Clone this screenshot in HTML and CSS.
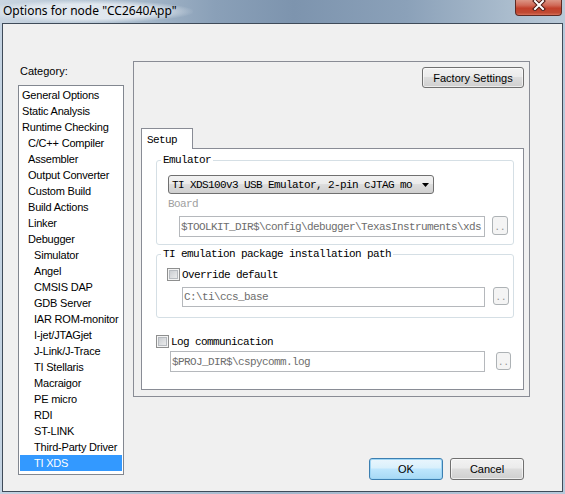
FILE: index.html
```html
<!DOCTYPE html>
<html lang="en">

<head>
  <meta charset="UTF-8" />
  <title>Options for node "CC2640App"</title>
  <link rel="stylesheet" href="styles.css">
</head>

<body>
  <div class="window">
    <div class="titlebar">
      <span class="title">Options for node "CC2640App"</span>
      <div class="close-btn">
        <svg width="14" height="11" viewBox="0 0 14 11">
          <path d="M3 1 L11 9 M11 1 L3 9" stroke="#4a1a14" stroke-width="4" stroke-linecap="square" fill="none" />
          <path d="M3 1 L11 9 M11 1 L3 9" stroke="#ffffff" stroke-width="2" stroke-linecap="square" fill="none" />
        </svg>
      </div>
    </div>

    <div class="client">
      <div class="category">
        <div class="category-label">Category:</div>
        <ul class="category-list">
          <li>General Options</li>
          <li>Static Analysis</li>
          <li>Runtime Checking</li>
          <li class="lvl1">C/C++ Compiler</li>
          <li class="lvl1">Assembler</li>
          <li class="lvl1">Output Converter</li>
          <li class="lvl1">Custom Build</li>
          <li class="lvl1">Build Actions</li>
          <li class="lvl1">Linker</li>
          <li class="lvl1">Debugger</li>
          <li class="lvl2">Simulator</li>
          <li class="lvl2">Angel</li>
          <li class="lvl2">CMSIS DAP</li>
          <li class="lvl2">GDB Server</li>
          <li class="lvl2">IAR ROM-monitor</li>
          <li class="lvl2">I-jet/JTAGjet</li>
          <li class="lvl2">J-Link/J-Trace</li>
          <li class="lvl2">TI Stellaris</li>
          <li class="lvl2">Macraigor</li>
          <li class="lvl2">PE micro</li>
          <li class="lvl2">RDI</li>
          <li class="lvl2">ST-LINK</li>
          <li class="lvl2">Third-Party Driver</li>
          <li class="lvl2 selected">TI XDS</li>
        </ul>
      </div>

      <div class="main">
        <div class="panel">
          <div class="panel-top">
            <button class="btn factory">Factory Settings</button>
          </div>

          <div class="tab-strip">
            <div class="tab mono">Setup</div>
          </div>

          <div class="tab-page mono">
            <fieldset class="group emulator">
              <legend>Emulator</legend>
              <div class="combo">
                <span class="combo-text">TI XDS100v3 USB Emulator, 2-pin cJTAG mo</span>
                <svg class="combo-arrow" width="7" height="4" viewBox="0 0 7 4">
                  <path d="M0 0 H7 L3.5 4 Z" fill="#000" />
                </svg>
              </div>
              <div class="field-label">Board</div>
              <div class="path-row board-row">
                <div class="edit">$TOOLKIT_DIR$\config\debugger\TexasInstruments\xds</div>
                <div class="browse">..</div>
              </div>
            </fieldset>

            <fieldset class="group package">
              <legend>TI emulation package installation path</legend>
              <label class="check-row override-row">
                <span class="checkbox"></span>
                <span>Override default</span>
              </label>
              <div class="path-row package-row">
                <div class="edit">C:\ti\ccs_base</div>
                <div class="browse">..</div>
              </div>
            </fieldset>

            <label class="check-row log-row">
              <span class="checkbox"></span>
              <span>Log communication</span>
            </label>
            <div class="path-row logfile-row">
              <div class="edit">$PROJ_DIR$\cspycomm.log</div>
              <div class="browse">..</div>
            </div>
          </div>
        </div>

        <div class="actions">
          <button class="btn default">OK</button>
          <button class="btn">Cancel</button>
        </div>
      </div>
    </div>
  </div>
</body>

</html>
```

FILE: styles.css
```css
* {
  box-sizing: border-box;
}

body {
  margin: 0;
  font-family: Tahoma, "Liberation Sans", Arial, sans-serif;
  font-size: 11px;
  color: #000;
  background: #b9cbdd;
}

/* Window frame */
.window {
  width: 565px;
  height: 494px;
  display: flex;
  flex-direction: column;
  background: linear-gradient(to right, #c4d3e2, #a3b7cc 50%, #b7c9db);
}

.titlebar {
  height: 23px;
  display: flex;
  align-items: flex-start;
  background: linear-gradient(to right, #c9d5e1 0%, #aebfcf 20%, #8aa0b8 38%, #7d94ae 52%, #8ba1b9 72%, #aabccd 90%, #b9c9d8 100%);
}

.title {
  height: 23px;
  padding: 3px 16px 0 3px;
  font-family: "Noto Sans", "Open Sans", sans-serif;
  font-size: 12px;
  line-height: 15px;
  color: #000;
  background: radial-gradient(ellipse at 45% 50%, rgba(226, 233, 240, 0.95) 45%, rgba(226, 233, 240, 0) 72%);
}

.close-btn {
  margin-left: auto;
  margin-right: 3px;
  width: 47px;
  height: 16px;
  border: 1px solid #5e2a23;
  border-top: none;
  border-radius: 0 0 4px 4px;
  background: linear-gradient(#dc9585 0%, #d06a58 35%, #c2402b 55%, #c04a33 85%, #d8705a 100%);
  display: flex;
  justify-content: center;
}

.client {
  flex: 1;
  margin: 0 2px 2px 2px;
  border: 1px solid #3f4b59;
  background: #f0f0f0;
  display: flex;
  padding-left: 15px;
}

/* Category tree */
.category {
  width: 106px;
  padding-top: 41px;
}

.category-label {
  line-height: 13px;
  margin: 0 0 7px 2px;
}

.category-list {
  list-style: none;
  margin: 0;
  height: 390px;
  padding: 1px;
  border: 1px solid #828790;
  background: #fff;
  letter-spacing: -0.2px;
}

.category-list li {
  line-height: 16px;
  height: 16px;
  padding-left: 2px;
  white-space: nowrap;
}

.category-list .lvl1 {
  padding-left: 8px;
}

.category-list .lvl2 {
  padding-left: 14px;
}

.category-list .selected {
  background: #3399ff;
  color: #fff;
}

/* Right side */
.main {
  width: 397px;
  margin-left: 9px;
  padding-top: 37px;
}

.panel {
  height: 336px;
  border: 1px solid #898c95;
  padding: 5px 5px 0 7px;
}

.panel-top {
  display: flex;
  justify-content: flex-end;
}

.btn {
  font: inherit;
  color: #000;
  padding: 0;
  border: 1px solid #707070;
  border-radius: 3px;
  background: linear-gradient(#f2f2f2 0%, #ebebeb 45%, #dddddd 50%, #cfcfcf 100%);
  box-shadow: inset 0 0 0 1px rgba(255, 255, 255, 0.6);
}

.factory {
  width: 102px;
  height: 21px;
}

.mono {
  font-family: "Liberation Mono", "DejaVu Sans Mono", monospace;
  font-size: 11px;
  letter-spacing: -0.6px;
}

.tab-strip {
  margin-top: 40px;
  display: flex;
}

.tab {
  position: relative;
  z-index: 1;
  width: 52px;
  height: 21px;
  margin-bottom: -1px;
  padding: 4px 0 0 5px;
  line-height: 14px;
  border: 1px solid #898c95;
  border-bottom: none;
  background: #fff;
}

.tab-page {
  height: 242px;
  border: 1px solid #898c95;
  background: #fff;
  padding-left: 14px;
  color: #000;
}

/* Group boxes */
.group {
  margin: 5px 9px 0 0;
  padding: 0;
  min-width: 0;
  border: 1px solid #d5dfe5;
  border-radius: 3px;
}

.group legend {
  margin-left: 4px;
  padding: 0 2px;
  line-height: 12px;
}

.emulator {
  padding-bottom: 7px;
}

.package {
  margin-top: 3px;
  padding-bottom: 10px;
}

.combo {
  display: flex;
  align-items: center;
  width: 266px;
  height: 19px;
  margin: 9px 0 0 11px;
  padding-left: 3px;
  border: 1px solid #707070;
  border-radius: 3px;
  background: linear-gradient(#f2f2f2 0%, #ebebeb 45%, #dddddd 50%, #cfcfcf 100%);
}

.combo-text {
  width: 243px;
  white-space: nowrap;
  line-height: 14px;
}

.combo-arrow {
  margin-left: 7px;
}

.field-label {
  margin: 4px 0 0 11px;
  line-height: 13px;
  color: #a0a0a0;
}

.path-row {
  display: flex;
  align-items: flex-start;
}

.edit {
  border: 1px solid #b5b8bc;
  background: #fff;
  color: #6d6d6d;
  padding-left: 1px;
  white-space: nowrap;
  overflow: hidden;
  display: flex;
  align-items: center;
}

.browse {
  border: 1px solid #adb2b5;
  border-radius: 3px;
  background: #f4f4f4;
  color: #8d8d8d;
  font-size: 9px;
  letter-spacing: 0;
  display: flex;
  justify-content: center;
  align-items: flex-end;
  line-height: 12px;
}

.board-row {
  margin: 5px 0 0 22px;
}

.board-row .edit {
  width: 306px;
  height: 21px;
}

.board-row .browse {
  width: 16px;
  height: 19px;
  margin-left: 7px;
}

.package-row {
  margin: 4px 0 0 25px;
}

.package-row .edit {
  width: 303px;
  height: 20px;
}

.package-row .browse {
  width: 16px;
  height: 18px;
  margin-left: 8px;
}

.logfile-row {
  margin: 1px 0 0 14px;
}

.logfile-row .edit {
  width: 315px;
  height: 21px;
}

.logfile-row .browse {
  width: 15px;
  height: 18px;
  margin: 1px 0 0 11px;
}

/* Check boxes */
.check-row {
  display: flex;
  align-items: center;
  height: 17px;
}

.checkbox {
  width: 13px;
  height: 13px;
  margin-right: 2px;
  border: 1px solid #8e8f8f;
  background: linear-gradient(135deg, #c2c6cb, #f3f3f3);
  box-shadow: inset 0 0 0 1px #f4f4f4, inset 0 0 0 2px #b7bbc0;
}

.override-row {
  margin: 6px 0 0 10px;
}

.log-row {
  margin-top: 15px;
}

/* Dialog buttons */
.actions {
  display: flex;
  justify-content: flex-end;
  gap: 7px;
  margin-top: 61px;
  padding-right: 6px;
}

.actions .btn {
  width: 74px;
  height: 22px;
}

.btn.default {
  border-color: #3c7fb1;
  background: linear-gradient(#eaf6fd 0%, #d9f0fc 45%, #bee6fd 50%, #a7d9f5 100%);
  box-shadow: inset 0 0 0 1px #9fd6f5;
}
```
